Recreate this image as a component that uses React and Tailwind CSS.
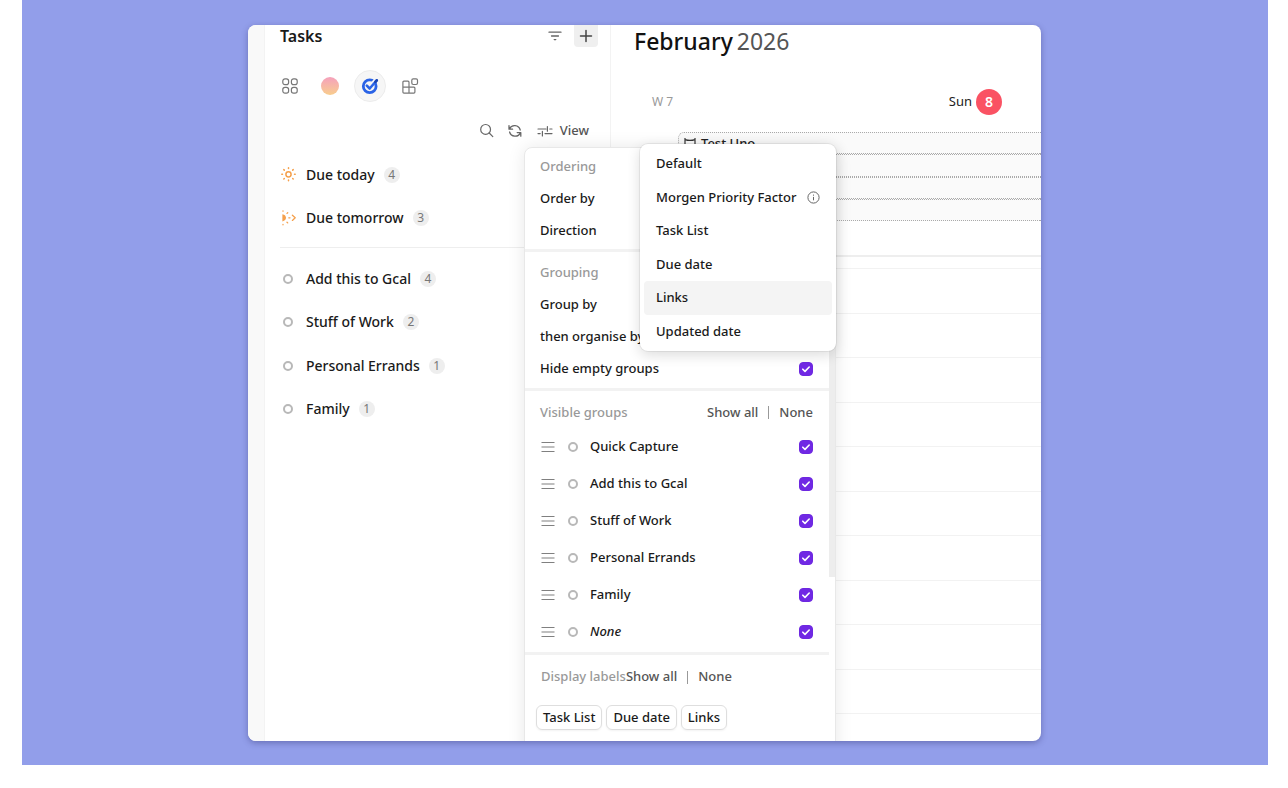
import { useState } from "react";

const dueRows = [
  { id: "today", label: "Due today", count: 4, Icon: SunIcon },
  { id: "tomorrow", label: "Due tomorrow", count: 3, Icon: TomorrowIcon },
];

const listRows = [
  { id: "gcal", label: "Add this to Gcal", count: 4 },
  { id: "work", label: "Stuff of Work", count: 2 },
  { id: "errands", label: "Personal Errands", count: 1 },
  { id: "family", label: "Family", count: 1 },
];

const groups = ["Quick Capture", "Add this to Gcal", "Stuff of Work", "Personal Errands", "Family", "None"];
const orderOptions = ["Default", "Morgen Priority Factor", "Task List", "Due date", "Links", "Updated date"];
const hours = [7, 8, 9, 10, 11, 12, 13, 14, 15, 16, 17];

function SunIcon() {
  return (
    <svg width="16" height="16" viewBox="0 0 16 16" fill="none" stroke="#f5a04c" strokeWidth="1.5" strokeLinecap="round">
      <circle cx="8.5" cy="7.3" r="2.6" />
      <path d="M8.5 .8v.7M8.5 13.1v.7M1.8 7.3h.7M14.5 7.3h.7M3.8 2.6l.5.5M12.7 11.5l.5.5M3.8 12l.5-.5M12.7 3.1l.5-.5" />
    </svg>
  );
}

function TomorrowIcon() {
  return (
    <svg width="16" height="16" viewBox="0 0 16 16" fill="none" stroke="#f5a04c" strokeWidth="1.3" strokeLinecap="round" strokeLinejoin="round">
      <path d="M2.4 4.2c2.4.4 3.6 2 3.6 3.6s-1.200 3.200-3.600 3.600z" fill="#f5a04c" stroke="none" />
      <path d="M3 .8v.4M3 14.400v.4M7 3.400l.7-.7M7 12.200l.7.7M8.800 7.800h1.200M12.400 5.200l2.800 2.600-2.800 2.600" />
    </svg>
  );
}

function FilterIcon() {
  return (
    <svg width="14" height="12" viewBox="0 0 14 12" fill="none" stroke="#666" strokeWidth="1.3" strokeLinecap="round">
      <path d="M1 2.2h12M3.5 6h7M6.2 9.6h1.6" />
    </svg>
  );
}

function PlusIcon() {
  return (
    <svg width="14" height="14" viewBox="0 0 14 14" fill="none" stroke="#444" strokeWidth="1.5" strokeLinecap="round">
      <path d="M7 1.5v11M1.5 7h11" />
    </svg>
  );
}

function AllIcon() {
  return (
    <svg width="18" height="18" viewBox="0 0 18 18" fill="none" stroke="#777" strokeWidth="1.2">
      <rect x="1.8" y="1.8" width="5.8" height="5.8" rx="2.2" />
      <rect x="10.4" y="1.8" width="5.8" height="5.8" rx="2.2" />
      <rect x="1.8" y="10.4" width="5.8" height="5.8" rx="2.2" />
      <rect x="10.4" y="10.4" width="5.8" height="5.8" rx="2.2" />
    </svg>
  );
}

function GoogleTasksIcon() {
  return (
    <svg width="18" height="18" viewBox="0 0 18 18" fill="none">
      <circle cx="8.7" cy="9.3" r="6.4" stroke="#2a63e6" strokeWidth="2.8" />
      <path d="M12 6l3.4-3.6" stroke="#f6f6f6" strokeWidth="4" />
      <path d="M5.8 8.6l2.9 2.9 6.9-8" stroke="#2a63e6" strokeWidth="2.6" strokeLinecap="round" strokeLinejoin="round" />
      <path d="M14.4 4.9l1.4-1.6" stroke="#1a43b0" strokeWidth="2.6" strokeLinecap="round" />
    </svg>
  );
}

function BlocksIcon() {
  return (
    <svg width="18" height="18" viewBox="0 0 18 18" fill="none" stroke="#777" strokeWidth="1.2" strokeLinejoin="round">
      <path d="M1.9 5.2a1 1 0 0 1 1-1H7a1 1 0 0 1 1 1v4.9h4.9a1 1 0 0 1 1 1v4a1 1 0 0 1-1 1h-10a1 1 0 0 1-1-1zM8 10.1v6M1.9 10.1H8" />
      <rect x="10.8" y="1.8" width="5.7" height="5.7" rx="1.4" />
    </svg>
  );
}

function SearchIcon() {
  return (
    <svg width="16" height="16" viewBox="0 0 16 16" fill="none" stroke="#666" strokeWidth="1.2" strokeLinecap="round">
      <circle cx="6.6" cy="6.4" r="4.9" />
      <path d="M10.2 10l3.6 3.6" />
    </svg>
  );
}

function RefreshIcon() {
  return (
    <svg width="16" height="16" viewBox="0 0 16 16" fill="none" stroke="#666" strokeWidth="1.3" strokeLinecap="round" strokeLinejoin="round">
      <path d="M2 2.6v3.6h3.6M2.4 5.9A5.8 5.8 0 0 1 13.2 7M13.8 13.2V9.6h-3.6M13.4 9.9A5.8 5.8 0 0 1 2.6 9" />
    </svg>
  );
}

function SlidersIcon() {
  return (
    <svg width="16" height="14" viewBox="0 0 16 14" fill="none" stroke="#666" strokeWidth="1.2" strokeLinecap="round">
      <path d="M1 5h8M10.4 2.6v4.6M12.8 5h2.2M1 9.6h2.2M5.4 7.4V12M8 9.6h7" />
    </svg>
  );
}

function DragIcon() {
  return (
    <svg width="14" height="12" viewBox="0 0 14 12" fill="none" stroke="#808080" strokeWidth="1.2">
      <path d="M.5 1.5h13M.5 6h13M.5 10.5h13" />
    </svg>
  );
}

function InfoIcon() {
  return (
    <svg width="13" height="13" viewBox="0 0 13 13" fill="none" stroke="#666" strokeWidth="1">
      <circle cx="6.5" cy="6.5" r="5.6" />
      <path d="M6.5 5.9v3.4M6.5 3.6v1.1" />
    </svg>
  );
}

function BannerIcon() {
  return (
    <svg width="12" height="13" viewBox="0 0 12 13" fill="none" stroke="#333" strokeWidth="1.2">
      <path d="M1 1v11M11 1v11M1 2.6c3 1 7 1 10 0M1 8h10" />
    </svg>
  );
}

function Ring() {
  return <span className="size-[10px] shrink-0 rounded-full border-2 border-[#b8b8b8]" />;
}

function Checkbox({ id }) {
  const [on, setOn] = useState(true);
  return (
    <span className="grid size-[14px] shrink-0">
      <input
        id={id}
        type="checkbox"
        checked={on}
        onChange={() => setOn(!on)}
        className="col-start-1 row-start-1 size-[14px] appearance-none rounded-[4px] border border-[#6d28e0] checked:bg-[#7028e4]"
      />
      {on && (
        <svg className="pointer-events-none col-start-1 row-start-1" width="14" height="14" viewBox="0 0 14 14" fill="none" stroke="#fff" strokeWidth="1.6" strokeLinecap="round" strokeLinejoin="round">
          <path d="M3.8 7.2L6 9.4l4.2-4.4" />
        </svg>
      )}
    </span>
  );
}

function TaskRow({ label, count, children }) {
  return (
    <li className="flex items-center">
      <span className="flex w-[26px] shrink-0 items-center">
        <span className="flex w-4 justify-center">{children}</span>
      </span>
      <span className="text-sm font-medium">{label}</span>
      <span className="ml-[9px] flex size-4 items-center justify-center rounded-full bg-[#eeeeee] text-xs text-[#777]">{count}</span>
    </li>
  );
}

function ShowToggle() {
  return (
    <span className="flex items-center gap-[10px] text-[#555]">
      <button type="button" className="font-medium">Show all</button>
      <span className="h-[13px] w-px bg-[#999]" />
      <button type="button" className="font-medium">None</button>
    </span>
  );
}

function OrderMenu() {
  return (
    <div role="menu" className="absolute -top-[3px] right-0 w-[196px] rounded-lg bg-white px-1 py-[3px] shadow-[0_0_0_1px_rgba(0,0,0,0.06),0_4px_14px_rgba(0,0,0,0.14)]">
      <div className="grid h-[201px] grid-rows-6">
        {orderOptions.map((option) => (
          <button
            key={option}
            type="button"
            role="menuitem"
            className={`flex items-center justify-between rounded pl-3 pr-3 text-left font-medium ${option === "Links" ? "bg-[#f4f4f4]" : ""}`}
          >
            {option}
            {option === "Morgen Priority Factor" && <InfoIcon />}
          </button>
        ))}
      </div>
    </div>
  );
}

function ViewPanel() {
  return (
    <div className="absolute -right-[247px] top-full z-10 w-[312px] text-[13px] font-medium text-[#1a1a1a]">
      <div className="flex h-[640px] rounded-t-lg border border-[#e8e8e8] bg-white shadow-[0_0_18px_rgba(0,0,0,0.09)]">
        <div className="min-w-0 flex-1">
          <section className="border-b-3 border-[#f2f2f2] px-[15px] pb-[2px] pt-[3px]">
            <h3 className="flex h-8 items-center text-[#999]">Ordering</h3>
            <div className="flex h-8 items-center">Order by</div>
            <div className="flex h-8 items-center">Direction</div>
          </section>
          <section className="border-b-3 border-[#f2f2f2] pb-[3px] pl-[15px] pr-4 pt-[5px]">
            <h3 className="flex h-8 items-center text-[#999]">Grouping</h3>
            <div className="flex h-8 items-center">Group by</div>
            <div className="flex h-8 items-center">then organise by</div>
            <div className="flex h-8 items-center justify-between">
              <label htmlFor="hide-empty">Hide empty groups</label>
              <Checkbox id="hide-empty" />
            </div>
          </section>
          <section className="border-b-3 border-[#f2f2f2] pb-[2px] pl-[15px] pr-4 pt-[6px]">
            <div className="flex h-[31px] items-center justify-between">
              <h3 className="text-[#999]">Visible groups</h3>
              <ShowToggle />
            </div>
            <ul>
              {groups.map((group, i) => (
                <li key={group} className="flex h-[37px] items-center pl-px">
                  <DragIcon />
                  <span className="ml-[13px] mr-3 flex"><Ring /></span>
                  <label htmlFor={`group-${i}`} className={`flex-1 ${group === "None" ? "italic" : ""}`}>{group}</label>
                  <Checkbox id={`group-${i}`} />
                </li>
              ))}
            </ul>
          </section>
          <section className="pl-[11px] pt-[6px]">
            <div className="flex h-8 items-center pl-[5px]">
              <h3 className="text-[#999]">Display labels</h3>
              <ShowToggle />
            </div>
            <div className="mt-3 flex gap-1">
              {["Task List", "Due date", "Links"].map((label) => (
                <button key={label} type="button" className="h-[25px] rounded-md border border-[#dedede] px-[6px] font-medium shadow-xs">
                  {label}
                </button>
              ))}
            </div>
          </section>
        </div>
        <div className="h-[429px] w-[6px] bg-[#ededed]" />
      </div>
      <OrderMenu />
    </div>
  );
}

function TasksPane() {
  return (
    <section className="w-[347px] shrink-0 border-x border-[#f3f3f3] text-[#1a1a1a]">
      <header className="flex h-[22px] items-center justify-between pl-[15px] pr-3">
        <h2 className="text-base leading-[22px] font-semibold">Tasks</h2>
        <div className="flex items-center gap-3">
          <button type="button" aria-label="Filter"><FilterIcon /></button>
          <button type="button" aria-label="Add task" className="flex h-[22px] w-6 items-center justify-center rounded-b bg-[#efefef]"><PlusIcon /></button>
        </div>
      </header>
      <nav className="mt-[23px] flex gap-2 pl-[9px]">
        <button type="button" aria-label="All sources" className="flex size-8 items-center justify-center"><AllIcon /></button>
        <button type="button" aria-label="Morgen" className="flex size-8 items-center justify-center">
          <span className="size-[18px] rounded-full bg-linear-to-b from-[#f5a0bb] to-[#f8cd8c]" />
        </button>
        <button type="button" aria-label="Google Tasks" className="flex size-8 items-center justify-center rounded-full border border-[#ececec] bg-[#f6f6f6]"><GoogleTasksIcon /></button>
        <button type="button" aria-label="Integrations" className="flex size-8 items-center justify-center"><BlocksIcon /></button>
      </nav>
      <div className="mt-[13px] flex h-8 items-center justify-end pr-[21px]">
        <button type="button" aria-label="Search" className="mr-3"><SearchIcon /></button>
        <button type="button" aria-label="Refresh" className="mr-[14px]"><RefreshIcon /></button>
        <div className="relative">
          <button type="button" className="flex h-8 items-center gap-[7px] text-[13px] font-medium text-[#555]">
            <SlidersIcon />
            View
          </button>
          <ViewPanel />
        </div>
      </div>
      <ul className="mt-[6px] grid h-[87px] grid-rows-2 pl-[15px]">
        {dueRows.map(({ id, label, count, Icon }) => (
          <TaskRow key={id} label={label} count={count}><Icon /></TaskRow>
        ))}
      </ul>
      <hr className="ml-[15px] mr-3 mt-[7px] border-[#eeeeee]" />
      <ul className="mt-[9px] grid h-[174px] grid-rows-4 pl-[15px]">
        {listRows.map(({ id, label, count }) => (
          <TaskRow key={id} label={label} count={count}><Ring /></TaskRow>
        ))}
      </ul>
    </section>
  );
}

function Calendar() {
  return (
    <section className="min-w-0 flex-1">
      <h1 className="flex h-8 items-center gap-1 pl-[23px] text-[23px] leading-8">
        <span className="font-medium text-[#111]">February</span>
        <span className="text-[#555]">2026</span>
      </h1>
      <div className="mt-8 flex h-[26px] items-center justify-between pl-[41px] pr-[39px]">
        <span className="text-xs text-[#999]">W 7</span>
        <span className="flex items-center gap-1 text-[13px] text-[#222]">
          Sun
          <span className="flex size-[26px] items-center justify-center rounded-full bg-[#fa5263] text-sm font-semibold text-white">8</span>
        </span>
      </div>
      <div className="ml-[67px] mt-[17px] grid h-[89px] grid-rows-4">
        {["Test Uno", "", "", ""].map((title, i) => (
          <div key={i} className="flex items-center gap-[5px] rounded-l-md border border-r-0 border-dotted border-[#aaa] bg-[#fafafa] pl-[5px] text-[13px] leading-5 font-medium text-[#222]">
            {title && <BannerIcon />}
            {title}
          </div>
        ))}
      </div>
      <div className="mt-[34px] h-[13px] border-t-2 border-[#eeeeee]" />
      <div className="grid h-[490px] grid-rows-11">
        {hours.map((hour) => (
          <div key={hour} className="border-t border-[#f2f2f2]" />
        ))}
      </div>
    </section>
  );
}

export default function App() {
  return (
    <div className="flex h-screen min-h-[400px] bg-white pb-[23px] pl-[22px] pr-5 font-['Noto_Sans','Open_Sans',sans-serif]">
      <main className="flex flex-1 justify-center bg-[#929eea] pb-6 pr-px pt-[25px]">
        <div className="flex w-full max-w-[793px] overflow-hidden rounded-lg bg-white shadow-[0_2px_6px_rgba(30,30,90,0.35)]">
          <aside className="w-4 shrink-0 bg-[#f9f9f9]" />
          <TasksPane />
          <Calendar />
        </div>
      </main>
    </div>
  );
}
